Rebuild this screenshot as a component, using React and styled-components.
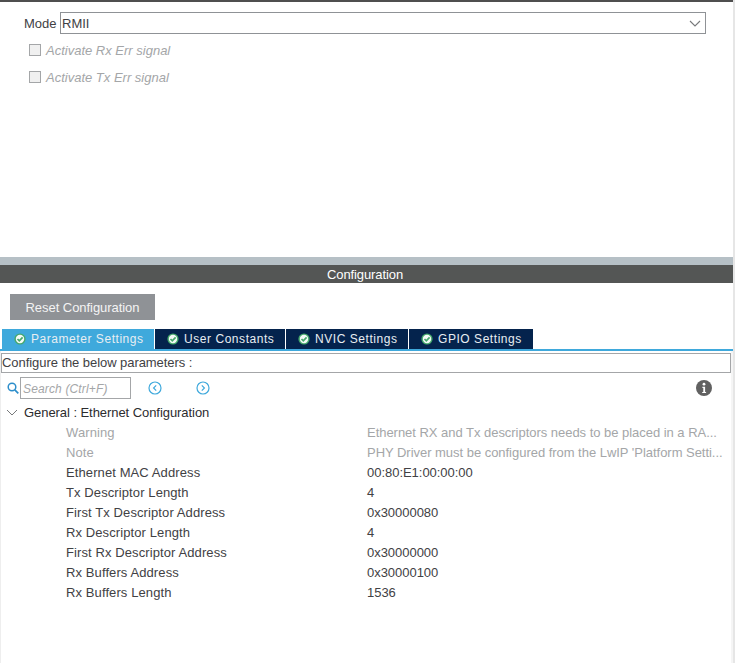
import styled, { createGlobalStyle } from "styled-components";

const GlobalStyle = createGlobalStyle`
  html, body {
    margin: 0;
    padding: 0;
    background: #fff;
  }
  * {
    box-sizing: border-box;
  }
  body {
    font-family: "Liberation Sans", Arial, sans-serif;
    font-size: 13px;
    color: #414144;
  }
`;

const tabs = [
  { label: "Parameter Settings", width: 152, active: true },
  { label: "User Constants", width: 130 },
  { label: "NVIC Settings", width: 122 },
  { label: "GPIO Settings", width: 124 },
];

const params = [
  { name: "Warning", value: "Ethernet RX and Tx descriptors needs to be placed in a RA...", muted: true },
  { name: "Note", value: "PHY Driver must be configured from the LwIP 'Platform Setti...", muted: true },
  { name: "Ethernet MAC Address", value: "00:80:E1:00:00:00" },
  { name: "Tx Descriptor Length", value: "4" },
  { name: "First Tx Descriptor Address", value: "0x30000080" },
  { name: "Rx Descriptor Length", value: "4" },
  { name: "First Rx Descriptor Address", value: "0x30000000" },
  { name: "Rx Buffers Address", value: "0x30000100" },
  { name: "Rx Buffers Length", value: "1536" },
];

const CheckIcon = () => (
  <svg width="12" height="12" viewBox="0 0 12 12">
    <circle cx="6" cy="6" r="5.6" fill="#46a86c" />
    <circle cx="6" cy="6" r="4.2" fill="#f4faf6" />
    <path d="M3.5 6 5.3 7.8 8.6 4.4" fill="none" stroke="#46a86c" strokeWidth="1.7" />
  </svg>
);

const NavIcon = ({ dir }) => (
  <svg width="14" height="14" viewBox="0 0 14 14">
    <circle cx="7" cy="7" r="6" fill="none" stroke="#3fa9dc" strokeWidth="1.2" />
    <path
      d={dir === "left" ? "M8.2 4.4 5.6 7l2.6 2.6" : "M5.8 4.4 8.4 7 5.8 9.6"}
      fill="none"
      stroke="#3fa9dc"
      strokeWidth="1.2"
    />
  </svg>
);

const App = () => {
  return (
    <Page>
      <GlobalStyle />
      <TopBar />
      <ModePanel>
        <ModeRow>
          <ModeLabel>Mode</ModeLabel>
          <Select>
            <span>RMII</span>
            <svg width="12" height="7" viewBox="0 0 12 7">
              <path d="M1 1l5 5 5-5" fill="none" stroke="#77797b" strokeWidth="1.1" />
            </svg>
          </Select>
        </ModeRow>
        <CheckRow>
          <CheckBox />
          <CheckLabel>Activate Rx Err signal</CheckLabel>
        </CheckRow>
        <CheckRow>
          <CheckBox />
          <CheckLabel>Activate Tx Err signal</CheckLabel>
        </CheckRow>
      </ModePanel>
      <Divider />
      <ConfigHeader>Configuration</ConfigHeader>
      <ResetButton>Reset Configuration</ResetButton>
      <TabBar>
        {tabs.map((t) => (
          <Tab key={t.label} $active={t.active} $width={t.width}>
            <CheckIcon />
            {t.label}
          </Tab>
        ))}
      </TabBar>
      <Content>
        <Hint>Configure the below parameters :</Hint>
        <SearchRow>
          <SearchIcon width="12" height="12" viewBox="0 0 12 12">
            <circle cx="5" cy="5" r="3.8" fill="none" stroke="#2d8ecb" strokeWidth="1.5" />
            <path d="M7.8 7.8 11.3 11.3" stroke="#2d8ecb" strokeWidth="1.7" />
          </SearchIcon>
          <SearchBox>Search (Ctrl+F)</SearchBox>
          <NavButtons>
            <NavIcon dir="left" />
            <NavIcon dir="right" />
          </NavButtons>
          <InfoIcon width="16" height="16" viewBox="0 0 16 16">
            <circle cx="8" cy="8" r="8" fill="#616161" />
            <circle cx="8" cy="4.2" r="1.4" fill="#fff" />
            <path d="M6.4 6.8h2.7v5.2h1v1.1H6.2V12h1.1V7.9h-.9z" fill="#fff" />
          </InfoIcon>
        </SearchRow>
        <GroupRow>
          <svg width="12" height="7" viewBox="0 0 12 7">
            <path d="M1 1l5 5 5-5" fill="none" stroke="#77797b" strokeWidth="1" />
          </svg>
          General : Ethernet Configuration
        </GroupRow>
        {params.map((p) => (
          <ParamRow key={p.name} $muted={p.muted}>
            <ParamName>{p.name}</ParamName>
            <ParamValue>{p.value}</ParamValue>
          </ParamRow>
        ))}
      </Content>
    </Page>
  );
};

export default App;

const Page = styled.div`
  width: 735px;
  height: 663px;
  overflow: hidden;
  display: flex;
  flex-direction: column;
  border-right: 2px solid #e6e6e6;
`;

const TopBar = styled.div`
  height: 2px;
  background: #4f4f4f;
`;

const ModePanel = styled.div`
  height: 255px;
  padding: 10px 0 0 24px;
`;

const ModeRow = styled.div`
  display: flex;
  align-items: center;
  gap: 3px;
  margin-bottom: 9px;
`;

const ModeLabel = styled.span`
  width: 33px;
  white-space: nowrap;
`;

const Select = styled.div`
  width: 646px;
  height: 22px;
  padding: 0 4px 0 1px;
  border: 1px solid #8f9296;
  display: flex;
  align-items: center;
  justify-content: space-between;
`;

const CheckRow = styled.div`
  display: flex;
  align-items: center;
  gap: 5px;
  height: 14px;
  margin: 0 0 13px 5px;
`;

const CheckBox = styled.span`
  width: 12px;
  height: 12px;
  background: #f0f0f0;
  border: 1px solid #a4a6a8;
`;

const CheckLabel = styled.span`
  font-style: italic;
  color: #a4a6a8;
`;

const Divider = styled.div`
  height: 8px;
  background: #b6c0c6;
`;

const ConfigHeader = styled.div`
  height: 18px;
  padding-right: 3px;
  background: #545655;
  color: #fff;
  text-align: center;
  line-height: 19px;
  letter-spacing: -0.1px;
  flex-shrink: 0;
`;

const ResetButton = styled.button`
  width: 145px;
  height: 26px;
  margin: 11px 0 9px 10px;
  padding: 1px 0 0;
  border: 0;
  background: #8f9296;
  color: #f4f4f4;
  font: 13px "Liberation Sans", Arial, sans-serif;
  letter-spacing: -0.05px;
  flex-shrink: 0;
`;

const TabBar = styled.div`
  display: flex;
  gap: 1px;
  height: 22px;
  padding-left: 2px;
  border-bottom: 2px solid #3fa9dc;
  flex-shrink: 0;
`;

const Tab = styled.div`
  width: ${(p) => p.$width}px;
  height: 20px;
  padding-left: 12px;
  display: flex;
  align-items: center;
  gap: 5px;
  background: ${(p) => (p.$active ? "#3fa9dc" : "#04234d")};
  color: #e8eef2;
  font-size: 12px;
  letter-spacing: 0.55px;
  white-space: nowrap;
`;

const Content = styled.div`
  flex: 1;
  padding-top: 2px;
  border-left: 1px solid #eeeeee;
  border-right: 2px solid #f5f5f5;
`;

const Hint = styled.div`
  width: 730px;
  height: 20px;
  border: 1px solid #a4a6a8;
  line-height: 18px;
  letter-spacing: -0.06px;
`;

const SearchRow = styled.div`
  display: flex;
  align-items: center;
  height: 22px;
  margin-top: 4px;
  padding-left: 6px;
`;

const SearchIcon = styled.svg`
  margin-right: 1px;
`;

const SearchBox = styled.div`
  width: 111px;
  height: 22px;
  padding-left: 2px;
  border: 1px solid #a4a6a8;
  line-height: 22px;
  font-size: 12px;
  font-style: italic;
  color: #a4a6a8;
  letter-spacing: 0.15px;
`;

const NavButtons = styled.div`
  display: flex;
  gap: 34px;
  margin-left: 17px;
`;

const InfoIcon = styled.svg`
  margin-left: auto;
  margin-right: 19px;
`;

const GroupRow = styled.div`
  display: flex;
  align-items: center;
  gap: 6px;
  height: 20px;
  margin-top: 3px;
  padding-left: 5px;
  color: #2c2c2e;
  letter-spacing: -0.06px;
`;

const ParamRow = styled.div`
  display: grid;
  grid-template-columns: 301px 363px;
  height: 20px;
  line-height: 21px;
  padding-left: 65px;
  color: ${(p) => (p.$muted ? "#a4a6a8" : "#414144")};
`;

const ParamName = styled.span`
  white-space: nowrap;
  letter-spacing: 0.1px;
`;

const ParamValue = styled.span`
  white-space: nowrap;
  letter-spacing: -0.03px;
`;
